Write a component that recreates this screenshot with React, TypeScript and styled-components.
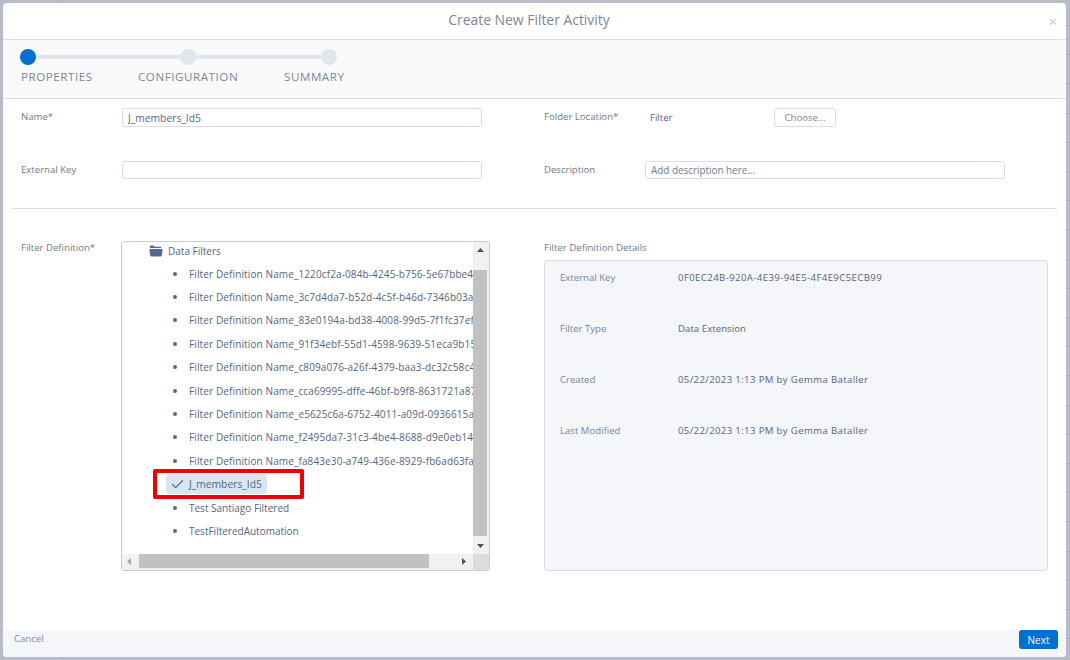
import styled, { createGlobalStyle } from 'styled-components'
import { Check } from 'lucide-react'

const GlobalStyle = createGlobalStyle`
  html, body {
    margin: 0;
    padding: 0;
    height: 100%;
    background: #b7bcc7;
    font-family: "Open Sans", "Liberation Sans", sans-serif;
    color: #54698d;
  }
  * {
    box-sizing: border-box;
  }
`

const Backdrop = styled.div`
  width: 1070px;
  height: 660px;
  padding: 3px 4px 3px 3px;
  overflow: hidden;
  background:
    linear-gradient(#acb1bc, #acb1bc) 63px 0 / 1px 100% no-repeat,
    repeating-linear-gradient(#b7bcc7 0, #b7bcc7 25px, #a9aeb9 25px, #a9aeb9 26px, #b7bcc7 26px, #b7bcc7 29.2px) right top / 4px 100% no-repeat;
`

const Modal = styled.div`
  height: 654px;
  display: flex;
  flex-direction: column;
  background: #fff;
  border-radius: 4px;
  overflow: hidden;
`

const Header = styled.header`
  position: relative;
  height: 37px;
  flex: none;
  display: flex;
  align-items: center;
  justify-content: center;
  border-bottom: 1px solid #d8dde6;
`

const Title = styled.h1`
  margin: 0 11px 4px 0;
  font-size: 13.9px;
  font-weight: 400;
  color: #7d8798;
`

const Close = styled.span`
  position: absolute;
  right: 9px;
  top: 11px;
  font-size: 15px;
  line-height: 15px;
  color: #c3c7ce;
`

const Stepper = styled.div`
  height: 59px;
  flex: none;
  padding: 9px 0 0 17px;
  background: #fafafa;
  border-bottom: 1px solid #d8dde6;
`

const Track = styled.div`
  display: flex;
  align-items: center;
  width: 318px;
  height: 16px;
`

const Dot = styled.span<{ $active?: boolean }>`
  flex: none;
  width: 16px;
  height: 16px;
  border-radius: 50%;
  background: ${(p) => (p.$active ? '#0070d2' : '#e0e5ee')};
`

const Line = styled.span<{ $width: number }>`
  flex: none;
  width: ${(p) => p.$width}px;
  height: 4px;
  background: #e0e5ee;
`

const StepLabels = styled.div`
  display: flex;
  margin: 4px 0 0 1px;
  font-size: 11.6px;
  line-height: 16px;
  letter-spacing: 0.55px;
  color: #7a869c;
`

const StepLabel = styled.span<{ $width: number }>`
  width: ${(p) => p.$width}px;
`

const Body = styled.main`
  flex: 1;
  min-height: 0;
  padding: 0 9px 0 9px;
`

const FormGrid = styled.div`
  display: grid;
  grid-template-columns: 523px 1fr;
  grid-auto-rows: 53px;
  padding: 9px 0 0 9px;
  height: 110px;
  border-bottom: 1px solid #d8dde6;
`

const Field = styled.div`
  display: flex;
  align-items: flex-start;
`

const Label = styled.label<{ $width?: number }>`
  flex: none;
  width: ${(p) => p.$width ?? 101}px;
  font-size: 9.6px;
  line-height: 18px;
  color: #6f7b90;
`

const TextInput = styled.input<{ $width?: number }>`
  width: ${(p) => p.$width ?? 360}px;
  height: 19px;
  padding: 0 5px;
  border: 1px solid #d8dde6;
  border-radius: 3px;
  background: #fff;
  font-family: inherit;
  font-size: 10.3px;
  color: #54698d;
  outline: none;

  &::placeholder {
    font-size: 9.9px;
    color: #6f7b90;
    opacity: 1;
  }
`

const ShortInput = styled(TextInput)`
  height: 18px;
`

const FolderName = styled.span`
  width: 124px;
  font-size: 9.6px;
  line-height: 19px;
  color: #5b667a;
`

const ChooseButton = styled.button`
  width: 62px;
  height: 19px;
  padding: 0;
  border: 1px solid #d8dde6;
  border-radius: 3px;
  background: #fff;
  font-family: inherit;
  font-size: 9.6px;
  color: #7a869c;
`

const DefinitionGrid = styled.div`
  display: grid;
  grid-template-columns: 523px 504px;
  padding: 32px 0 0 9px;
`

const DefinitionLeft = styled.div`
  display: flex;
  align-items: flex-start;
`

const DefinitionLabel = styled(Label)`
  width: 100px;
  line-height: 12px;
  margin-top: 1px;
`

const Tree = styled.div`
  width: 369px;
  height: 330px;
  display: grid;
  grid-template-columns: 1fr 16px;
  grid-template-rows: 1fr 16px;
  border: 1px solid #c9ccd1;
  border-radius: 3px;
  overflow: hidden;
`

const TreeViewport = styled.ul`
  margin: 0;
  padding: 0;
  list-style: none;
  overflow: hidden;
  white-space: nowrap;
  font-size: 10px;
  color: #56657f;
`

const FolderRow = styled.li`
  display: flex;
  align-items: center;
  height: 18px;
  margin-bottom: 2px;
  padding-left: 27px;
  gap: 5px;
`

const TreeRow = styled.li`
  display: flex;
  align-items: center;
  height: 23.4px;
  padding-left: 66px;
`

const FilterRow = styled(TreeRow)`
  letter-spacing: 0.12px;
`

const SelectedRow = styled(TreeRow)`
  position: relative;
`

const SelectedChip = styled.span`
  display: flex;
  align-items: center;
  height: 20px;
  margin-left: -22px;
  padding: 0 5px 0 4px;
  gap: 4px;
  border-radius: 4px;
  background: #d8e6f1;
  font-size: 10.3px;
`

const Annotation = styled.span`
  position: absolute;
  left: 31px;
  top: -4px;
  width: 151px;
  height: 30px;
  border: 4px solid #f00000;
  border-radius: 2px;
`

const Bullet = styled.span`
  width: 4px;
  height: 4px;
  margin: 0 12px 0 -15px;
  flex: none;
  border-radius: 50%;
  background: #54698d;
`

const VerticalBar = styled.div`
  display: flex;
  flex-direction: column;
  padding-right: 2px;
  background: #f1f1f1;
`

const HorizontalBar = styled.div`
  display: flex;
  padding-bottom: 2px;
  background: #f1f1f1;
`

const ScrollArrow = styled.span`
  flex: none;
  display: flex;
  align-items: center;
  justify-content: center;
  width: 14px;
  height: 14px;
`

const UpArrow = styled(ScrollArrow)`
  align-items: flex-start;
  height: 28px;
  padding-top: 4px;
`

const DownArrow = styled(ScrollArrow)`
  height: 18px;
`

const RightArrow = styled(ScrollArrow)`
  margin-right: 3px;
`

const VerticalThumb = styled.div`
  flex: 1;
  background: #c1c1c1;
`

const HorizontalThumb = styled.div`
  width: 290px;
  margin-left: 2px;
  background: #c1c1c1;
`

const HorizontalSpacer = styled.div`
  flex: 1;
`

const BarCorner = styled.div`
  background: #dcdcdc;
`

const LeftArrow = styled(ScrollArrow)`
  width: 15px;
`

const DetailsColumn = styled.div`
  display: flex;
  flex-direction: column;
`

const DetailsTitle = styled.h2`
  margin: 1px 0 6px 0;
  font-size: 9.7px;
  line-height: 12px;
  font-weight: 400;
  color: #6f7b90;
`

const DetailsPanel = styled.div`
  height: 311px;
  padding: 8px 15px;
  border: 1px solid #d8dde6;
  border-radius: 3px;
  background: #f4f6f9;
`

const DetailRow = styled.div`
  display: flex;
  height: 51px;
  font-size: 9.6px;
  line-height: 17px;
`

const DetailKey = styled.span`
  width: 118px;
  color: #7a869c;
`

const DetailValue = styled.span<{ $tracking: number }>`
  letter-spacing: ${(p) => p.$tracking}px;
  color: #56657f;
`

const Footer = styled.footer`
  height: 27px;
  flex: none;
  display: flex;
  align-items: flex-start;
  justify-content: space-between;
  padding: 0 8px 0 11px;
  background: #f4f6f9;
`

const CancelLink = styled.a`
  margin-top: 1px;
  font-size: 9.6px;
  line-height: 16px;
  color: #7c8fb5;
`

const NextButton = styled.button`
  width: 39px;
  height: 19px;
  padding: 0;
  border: 0;
  border-radius: 3px;
  background: #0070d2;
  color: #fff;
  font-family: inherit;
  font-size: 10px;
`

const filterNames = [
  'Filter Definition Name_1220cf2a-084b-4245-b756-5e67bbe4',
  'Filter Definition Name_3c7d4da7-b52d-4c5f-b46d-7346b03a',
  'Filter Definition Name_83e0194a-bd38-4008-99d5-7f1fc37ef',
  'Filter Definition Name_91f34ebf-55d1-4598-9639-51eca9b15',
  'Filter Definition Name_c809a076-a26f-4379-baa3-dc32c58c4',
  'Filter Definition Name_cca69995-dffe-46bf-b9f8-8631721a87',
  'Filter Definition Name_e5625c6a-6752-4011-a09d-0936615a',
  'Filter Definition Name_f2495da7-31c3-4be4-8688-d9e0eb14',
  'Filter Definition Name_fa843e30-a749-436e-8929-fb6ad63fa',
]

const details = [
  { key: 'External Key', value: '0F0EC24B-920A-4E39-94E5-4F4E9C5ECB99', tracking: 0.4 },
  { key: 'Filter Type', value: 'Data Extension', tracking: 0.05 },
  { key: 'Created', value: '05/22/2023 1:13 PM by Gemma Bataller', tracking: 0.36 },
  { key: 'Last Modified', value: '05/22/2023 1:13 PM by Gemma Bataller', tracking: 0.36 },
]

function FolderIcon() {
  return (
    <svg width="14" height="12" viewBox="0 0 14 12">
      <path d="M1 1.6C1 1 1.4.6 2 .6h2.6l1.2 1.2h5.4c.6 0 1 .4 1 1v.3H1z" fill="#54698d" />
      <path d="M.4 3.9h13.2l-.8 6.6c-.1.6-.5.9-1 .9H2.2c-.5 0-.9-.3-1-.9z" fill="#54698d" />
    </svg>
  )
}

function Triangle({ dir }: { dir: 'up' | 'down' | 'left' | 'right' }) {
  const points = {
    up: '1,6 4.5,2 8,6',
    down: '1,3 4.5,7 8,3',
    left: '6,1 2,4.5 6,8',
    right: '3,1 7,4.5 3,8',
  }
  return (
    <svg width="9" height="9" viewBox="0 0 9 9">
      <polygon points={points[dir]} fill={dir === 'left' ? '#a3a3a3' : '#505050'} />
    </svg>
  )
}

export default function App() {
  return (
    <Backdrop>
      <GlobalStyle />
      <Modal>
        <Header>
          <Title>Create New Filter Activity</Title>
          <Close>×</Close>
        </Header>

        <Stepper>
          <Track>
            <Dot $active />
            <Line $width={144} />
            <Dot />
            <Line $width={125} />
            <Dot />
          </Track>
          <StepLabels>
            <StepLabel $width={117}>PROPERTIES</StepLabel>
            <StepLabel $width={146}>CONFIGURATION</StepLabel>
            <StepLabel $width={70}>SUMMARY</StepLabel>
          </StepLabels>
        </Stepper>

        <Body>
          <FormGrid>
            <Field>
              <Label>Name*</Label>
              <TextInput readOnly value="J_members_Id5" />
            </Field>
            <Field>
              <Label $width={106}>Folder Location*</Label>
              <FolderName>Filter</FolderName>
              <ChooseButton>Choose...</ChooseButton>
            </Field>
            <Field>
              <Label>External Key</Label>
              <ShortInput readOnly value="" />
            </Field>
            <Field>
              <Label $width={101}>Description</Label>
              <ShortInput readOnly value="" placeholder="Add description here..." />
            </Field>
          </FormGrid>

          <DefinitionGrid>
            <DefinitionLeft>
              <DefinitionLabel>Filter Definition*</DefinitionLabel>
              <Tree>
                <TreeViewport>
                  <FolderRow>
                    <FolderIcon />
                    Data Filters
                  </FolderRow>
                  {filterNames.map((name) => (
                    <FilterRow key={name}>
                      <Bullet />
                      {name}
                    </FilterRow>
                  ))}
                  <SelectedRow>
                    <SelectedChip>
                      <Check size={15} strokeWidth={2} color="#54698d" />
                      J_members_Id5
                    </SelectedChip>
                    <Annotation />
                  </SelectedRow>
                  <TreeRow>
                    <Bullet />
                    Test Santiago Filtered
                  </TreeRow>
                  <TreeRow>
                    <Bullet />
                    TestFilteredAutomation
                  </TreeRow>
                </TreeViewport>
                <VerticalBar>
                  <UpArrow>
                    <Triangle dir="up" />
                  </UpArrow>
                  <VerticalThumb />
                  <DownArrow>
                    <Triangle dir="down" />
                  </DownArrow>
                </VerticalBar>
                <HorizontalBar>
                  <LeftArrow>
                    <Triangle dir="left" />
                  </LeftArrow>
                  <HorizontalThumb />
                  <HorizontalSpacer />
                  <RightArrow>
                    <Triangle dir="right" />
                  </RightArrow>
                </HorizontalBar>
                <BarCorner />
              </Tree>
            </DefinitionLeft>

            <DetailsColumn>
              <DetailsTitle>Filter Definition Details</DetailsTitle>
              <DetailsPanel>
                {details.map((row) => (
                  <DetailRow key={row.key}>
                    <DetailKey>{row.key}</DetailKey>
                    <DetailValue $tracking={row.tracking}>{row.value}</DetailValue>
                  </DetailRow>
                ))}
              </DetailsPanel>
            </DetailsColumn>
          </DefinitionGrid>
        </Body>

        <Footer>
          <CancelLink>Cancel</CancelLink>
          <NextButton>Next</NextButton>
        </Footer>
      </Modal>
    </Backdrop>
  )
}
